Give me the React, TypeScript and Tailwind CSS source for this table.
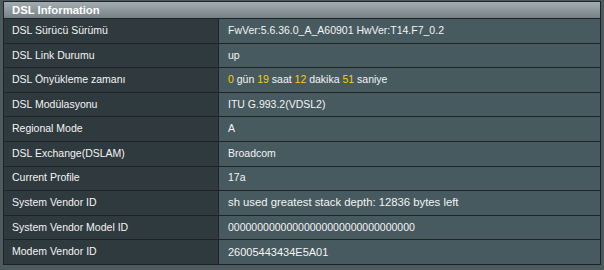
import React from "react";

type Row = { k: string; v: React.ReactNode; vs?: string };

const Y = ({ children }: { children: React.ReactNode }) => (
  <span className="text-[#FFCC00]">{children}</span>
);

const rows: Row[] = [
  { k: "DSL Sürücü Sürümü", v: "FwVer:5.6.36.0_A_A60901 HwVer:T14.F7_0.2" },
  { k: "DSL Link Durumu", v: "up" },
  {
    k: "DSL Önyükleme zamanı",
    v: (
      <>
        <Y>0</Y> gün <Y>19</Y> saat <Y>12</Y> dakika <Y>51</Y> saniye
      </>
    ),
  },
  { k: "DSL Modülasyonu", v: "ITU G.993.2(VDSL2)" },
  { k: "Regional Mode", v: "A" },
  { k: "DSL Exchange(DSLAM)", v: "Broadcom" },
  { k: "Current Profile", v: "17a" },
  { k: "System Vendor ID", v: "sh used greatest stack depth: 12836 bytes left", vs: "text-[11.3px]" },
  { k: "System Vendor Model ID", v: "00000000000000000000000000000000" },
  { k: "Modem Vendor ID", v: "26005443434E5A01", vs: "text-[11px]" },
];

export default function App() {
  return (
    <div
      className="w-[604px] h-[270px] bg-[#4D5A5E] pt-[1px] pl-[3px] pr-[3px]"
      style={{ fontFamily: '"Liberation Sans", Arial, sans-serif' }}
    >
      <div className="border border-[#1E2326] bg-[#1E2326] flex flex-col gap-px">
        <div className="h-[16px] bg-gradient-to-b from-[#A3ADB1] to-[#768287] text-white font-bold text-[11.3px] leading-[16px] pl-[8px]">
          DSL Information
        </div>
        {rows.map((r, i) => (
          <div key={i} className="flex h-[23.6px] gap-px text-[#F4F4F4] text-[10.5px]">
            <div className="w-[214px] bg-[#2F3A3E] flex items-center pl-[8px]">
              <span>{r.k}</span>
            </div>
            <div className={`flex-1 bg-[#475A5F] flex items-center pl-[9px] ${r.vs ?? ""}`}>
              <span>{r.v}</span>
            </div>
          </div>
        ))}
      </div>
    </div>
  );
}
